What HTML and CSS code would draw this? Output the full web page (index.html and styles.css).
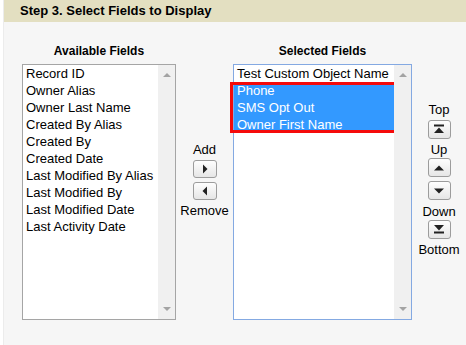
FILE: index.html
```html
<!DOCTYPE html>
<html lang="en">
<head>
    <meta charset="UTF-8">
    <title>Step 3. Select Fields to Display</title>
    <link rel="stylesheet" href="styles.css">
</head>
<body>
    <div class="page">
        <div class="step-header">Step 3. Select Fields to Display</div>

        <div class="picker">
            <div class="list-col available">
                <div class="col-title">Available Fields</div>
                <div class="listbox">
                    <div class="options">
                        <div class="option">Record ID</div>
                        <div class="option">Owner Alias</div>
                        <div class="option">Owner Last Name</div>
                        <div class="option">Created By Alias</div>
                        <div class="option">Created By</div>
                        <div class="option">Created Date</div>
                        <div class="option">Last Modified By Alias</div>
                        <div class="option">Last Modified By</div>
                        <div class="option">Last Modified Date</div>
                        <div class="option">Last Activity Date</div>
                    </div>
                    <div class="scrollbar">
                        <span class="arrow-up"></span>
                        <span class="arrow-down"></span>
                    </div>
                </div>
            </div>

            <div class="move-col">
                <div class="btn-label">Add</div>
                <button class="btn btn-move">
                    <svg width="10" height="12" viewBox="0 0 10 12"><path d="M3 1.5 L7.5 6 L3 10.5 Z" fill="#222"/></svg>
                </button>
                <button class="btn btn-move gap">
                    <svg width="10" height="12" viewBox="0 0 10 12"><path d="M7 1.5 L2.5 6 L7 10.5 Z" fill="#222"/></svg>
                </button>
                <div class="btn-label">Remove</div>
            </div>

            <div class="list-col selected">
                <div class="col-title">Selected Fields</div>
                <div class="listbox focused">
                    <div class="options">
                        <div class="option">Test Custom Object Name</div>
                        <div class="picked">
                            <div class="option on">Phone</div>
                            <div class="option on">SMS Opt Out</div>
                            <div class="option on">Owner First Name</div>
                        </div>
                    </div>
                    <div class="scrollbar">
                        <span class="arrow-up"></span>
                        <span class="arrow-down"></span>
                    </div>
                </div>
            </div>

            <div class="order-col">
                <div class="btn-label">Top</div>
                <button class="btn btn-order">
                    <svg width="12" height="12" viewBox="0 0 12 12"><rect x="1" y="1.5" width="10" height="2" fill="#222"/><path d="M1 10 L6 4.5 L11 10 Z" fill="#222"/></svg>
                </button>
                <div class="btn-label">Up</div>
                <button class="btn btn-order tight">
                    <svg width="12" height="12" viewBox="0 0 12 12"><path d="M1 8.5 L6 3.5 L11 8.5 Z" fill="#222"/></svg>
                </button>
                <button class="btn btn-order gap">
                    <svg width="12" height="12" viewBox="0 0 12 12"><path d="M1 3.5 L6 8.5 L11 3.5 Z" fill="#222"/></svg>
                </button>
                <div class="btn-label">Down</div>
                <button class="btn btn-order tight">
                    <svg width="12" height="12" viewBox="0 0 12 12"><path d="M1 2 L6 7.5 L11 2 Z" fill="#222"/><rect x="1" y="8.5" width="10" height="2" fill="#222"/></svg>
                </button>
                <div class="btn-label">Bottom</div>
            </div>
        </div>
    </div>
</body>
</html>
```

FILE: styles.css
```css
body {
    margin: 0;
    background: #ffffff;
    font-family: "Liberation Sans", Arial, sans-serif;
    color: #000000;
}

.page {
    margin-left: 3px;
    height: 345px;
    background: #f6f6f6;
    border-left: 1px solid #ececec;
}

.step-header {
    height: 22px;
    line-height: 22px;
    padding-left: 16px;
    background: #e3dfc1;
    font-size: 13px;
    font-weight: bold;
}

.picker {
    display: flex;
    padding: 22px 0 0 18px;
}

.list-col {
    display: flex;
    flex-direction: column;
}

.available {
    width: 154px;
}

.selected {
    width: 179px;
}

.col-title {
    font-size: 12px;
    font-weight: bold;
    line-height: 15px;
    text-align: center;
    margin-bottom: 5px;
}

.listbox {
    display: flex;
    height: 256px;
    box-sizing: border-box;
    border: 1px solid #a5a5a5;
    background: #ffffff;
}

.listbox.focused {
    border-color: #84a9e2;
}

.options {
    flex: 1;
    font-size: 13px;
    line-height: 17px;
}

.option {
    padding-left: 3px;
    white-space: nowrap;
}

.picked {
    position: relative;
}

/* red annotation frame over the selected rows */
.picked::after {
    content: "";
    position: absolute;
    top: 0;
    bottom: 0;
    left: -4px;
    right: -3px;
    border: 3px solid #f50a0a;
}

.option.on {
    background: #3399ff;
    color: #ffffff;
}

.scrollbar {
    position: relative;
    width: 17px;
    background: #f0f0f0;
}

.arrow-up,
.arrow-down {
    position: absolute;
    left: 5px;
    width: 0;
    height: 0;
    border-left: 4px solid transparent;
    border-right: 4px solid transparent;
}

.arrow-up {
    top: 8px;
    border-bottom: 4px solid #a3a3a3;
}

.arrow-down {
    bottom: 8px;
    border-top: 4px solid #a3a3a3;
}

.move-col,
.order-col {
    display: flex;
    flex-direction: column;
    align-items: center;
    justify-content: center;
    padding-bottom: 5px;
}

.move-col {
    width: 57px;
}

.order-col {
    width: 54px;
}

.btn-label {
    font-size: 13px;
    line-height: 17px;
    margin-top: 2px;
}

.btn-label:first-child {
    margin-top: 0;
}

.btn {
    display: flex;
    align-items: center;
    justify-content: center;
    height: 18px;
    padding: 0;
    margin-top: 2px;
    border: 1px solid #9c9c9c;
    border-radius: 3px;
    background: linear-gradient(#fefefe, #e6e6e6);
}

.btn-move {
    width: 24px;
}

.btn-order {
    width: 23px;
    height: 19px;
}

.order-col .btn-label {
    margin-top: 2.5px;
}

.order-col .btn-label:first-child {
    margin-top: 0;
}

.btn.tight {
    margin-top: 0;
}

.btn.gap {
    margin-top: 4px;
}
```
